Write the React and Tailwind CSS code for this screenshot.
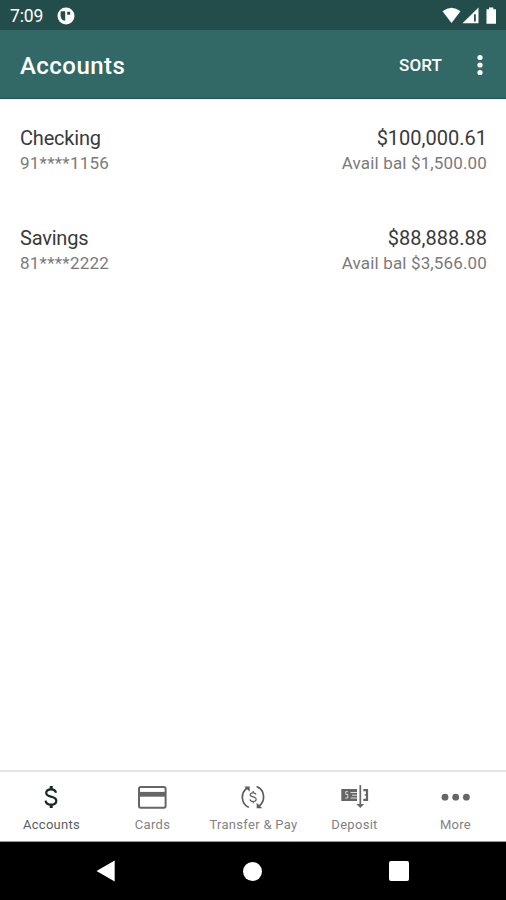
const accounts = [
  { name: 'Checking', number: '91****1156', balance: '$100,000.61', available: '$1,500.00' },
  { name: 'Savings', number: '81****2222', balance: '$88,888.88', available: '$3,566.00' },
];

function StatusBar() {
  return (
    <div className="flex h-[30px] shrink-0 items-center bg-[#234d4b] pl-[10px] pr-[8px] text-white">
      <span className="pt-[2px] text-[17.5px] leading-[30px] tracking-[-0.1px]">7:09</span>
      <svg className="ml-[14px] mt-px" width="18" height="18" viewBox="0 0 18 18">
        <circle cx="9" cy="9" r="8.5" fill="#fff" />
        <path d="M4.6 4.2H8.2V13.4H6.4Q3.8 12 3.6 9V5.2Q3.6 4.2 4.6 4.2ZM10.2 4.8H13.2V7.8H10.2Z" fill="#234d4b" />
      </svg>
      <svg className="ml-auto mt-px" width="56" height="20" viewBox="0 0 56 20">
        <path d="M0.5 5.2Q9.5 -1.8 18.5 5.2L9.5 17Z" fill="#fff" />
        <path d="M20.5 17.2L36.5 1.5V17.2Z" fill="#fff" />
        <path d="M32 8.3H33.8V15.5H32Z" fill="#234d4b" />
        <path d="M44.5 3.2H47V1.5H51.3V3.2H54V17.8H44.5Z" fill="#fff" />
      </svg>
    </div>
  );
}

function AppBar() {
  return (
    <header className="flex h-[69px] shrink-0 items-center border-b border-[#1d5552] bg-[#326967] pl-[20px] pr-[21px] text-white">
      <h1 className="pt-[3px] text-[24px] font-medium leading-[32px] tracking-[0.45px]">Accounts</h1>
      <button className="ml-auto pt-[3px] text-[17px] font-medium tracking-[0.1px]">SORT</button>
      <svg className="ml-[33px] mt-px" width="10" height="22" viewBox="0 0 10 22">
        <circle cx="5" cy="3.5" r="2.6" fill="#fff" />
        <circle cx="5" cy="11" r="2.6" fill="#fff" />
        <circle cx="5" cy="18.5" r="2.6" fill="#fff" />
      </svg>
    </header>
  );
}

function AccountRow({ account }) {
  return (
    <li className="flex h-[100px] justify-between pl-[20px] pr-[19px] pt-[26px]">
      <div>
        <p className="text-[20px] leading-[26px] tracking-[-0.2px] text-[#3a3a3a]">{account.name}</p>
        <p className="text-[17px] leading-[24px] tracking-[0.25px] text-[#7a7a7a]">{account.number}</p>
      </div>
      <div className="text-right">
        <p className="text-[20px] leading-[26px] text-[#3a3a3a]">{account.balance}</p>
        <p className="text-[17px] leading-[24px] tracking-[0.15px] text-[#7a7a7a]">Avail bal {account.available}</p>
      </div>
    </li>
  );
}

function DollarIcon() {
  return (
    <svg width="30" height="30" viewBox="1 0 30 30" fill="none" stroke="#172a2a" strokeWidth="2.2">
      <path d="M20 10.8C19.6 8.5 17.8 7.3 15 7.3C12 7.3 10.2 8.7 10.2 10.9C10.2 16 20.3 13.2 20.3 18.8C20.3 21.3 18.2 22.7 15.2 22.7C12 22.7 9.8 21.2 9.6 18.6" />
      <path d="M15.2 4V7.5M15.2 22.5V26" strokeWidth="3" />
    </svg>
  );
}

function CardIcon() {
  return (
    <svg width="30" height="30" viewBox="1 0 30 30" fill="none">
      <rect x="2" y="4.9" width="26.6" height="20.9" rx="1.8" stroke="#666" strokeWidth="2" />
      <path d="M2 12.3H28" stroke="#666" strokeWidth="4.8" />
    </svg>
  );
}

function TransferIcon() {
  return (
    <svg width="30" height="30" viewBox="1 0 30 30" fill="none" stroke="#5c5c5c" strokeWidth="1.7">
      <path d="M10.8 25.5C2.6 21.7 2.3 10.7 9.4 5.8" />
      <path d="M18.6 4.5C27 7.8 27.9 19 20.8 24.3" />
      <path d="M6.3 4.4H11.7V9.8Z" fill="#5c5c5c" stroke="none" />
      <path d="M18.7 20.8V26.3H24.2Z" fill="#5c5c5c" stroke="none" />
      <path d="M18 12.5C17.6 11.2 16.5 10.8 15.1 10.8C13.4 10.8 12.2 11.5 12.2 12.8C12.2 15.7 18.2 14.2 18.2 17.3C18.2 18.7 16.9 19.5 15.2 19.5C13.4 19.5 12.2 18.7 12 17.3M15.2 9V11M15.2 19.4V21.3" strokeWidth="1.2" />
    </svg>
  );
}

function DepositIcon() {
  return (
    <svg width="30" height="30" viewBox="0 0 30 30" fill="none">
      <path d="M1.3 7H17V19H1.3Z" fill="#666" />
      <path d="M7.8 9.6H5.8V12.5H7.8V16H5.3M10.5 10.5H17M12 13.2H17M10.5 16H17" stroke="#ddd" strokeWidth="1" />
      <path d="M23.3 8.2H27V17.8H23.3" stroke="#666" strokeWidth="2.2" />
      <path d="M24.8 13H27" stroke="#666" strokeWidth="1.4" />
      <path d="M20.3 3V23" stroke="#666" strokeWidth="1.7" />
      <path d="M16.4 22H24.2L20.3 26Z" fill="#666" />
    </svg>
  );
}

function MoreIcon() {
  return (
    <svg width="30" height="30" viewBox="0 0 30 30" fill="#666">
      <circle cx="4" cy="15.2" r="3.4" />
      <circle cx="14.7" cy="15.2" r="3.4" />
      <circle cx="25.4" cy="15.2" r="3.4" />
    </svg>
  );
}

const tabs = [
  { label: 'Accounts', Icon: DollarIcon, color: 'text-[#565e5e]' },
  { label: 'Cards', Icon: CardIcon, color: 'text-[#828282]' },
  { label: 'Transfer & Pay', Icon: TransferIcon, color: 'text-[#828282]' },
  { label: 'Deposit', Icon: DepositIcon, color: 'text-[#828282]' },
  { label: 'More', Icon: MoreIcon, color: 'text-[#828282]' },
];

export default function App() {
  return (
    <div className="flex h-[900px] w-[506px] flex-col overflow-hidden bg-white font-[Roboto,sans-serif]">
      <StatusBar />
      <AppBar />
      <ul className="flex-1">
        {accounts.map((account) => (
          <AccountRow key={account.name} account={account} />
        ))}
      </ul>
      <nav className="grid h-[72px] shrink-0 grid-cols-5 border-b border-t-2 border-b-[#999] border-t-[#e3e3e3] pl-px">
        {tabs.map(({ label, Icon, color }) => (
          <button key={label} className="flex flex-col items-center pt-[10px]">
            <Icon />
            <span className={`mt-[4px] whitespace-nowrap text-[13px] leading-[18px] tracking-[0.3px] ${color}`}>{label}</span>
          </button>
        ))}
      </nav>
      <div className="flex h-[58px] shrink-0 items-center justify-between bg-black pl-[96px] pr-[97px]">
        <svg width="20" height="22" viewBox="0 0 20 22"><path d="M0.5 11L18.7 0.5V21.5Z" fill="#fff" /></svg>
        <span className="size-[19px] rounded-full bg-white" />
        <span className="size-[20px] rounded-[2px] bg-white" />
      </div>
    </div>
  );
}
